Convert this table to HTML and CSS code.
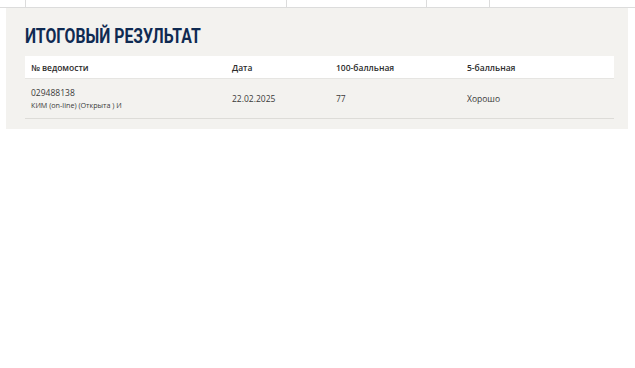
FILE: index.html
```html
<!DOCTYPE html>
<html lang="ru">
<head>
<meta charset="utf-8">
<title>Итоговый результат</title>
<link rel="stylesheet" href="styles.css">
</head>
<body>
  <div class="strip">
    <div class="strip-gap"></div>
    <div class="strip-cell c1"></div>
    <div class="strip-cell c2"></div>
    <div class="strip-cell c3"></div>
  </div>
  <section class="panel">
    <h2 class="panel-title"><span class="title-text">ИТОГОВЫЙ РЕЗУЛЬТАТ</span></h2>
    <table class="results">
      <colgroup>
        <col class="w1"><col class="w2"><col class="w3"><col class="w4">
      </colgroup>
      <thead>
        <tr>
          <th>№ ведомости</th>
          <th>Дата</th>
          <th>100-балльная</th>
          <th>5-балльная</th>
        </tr>
      </thead>
      <tbody>
        <tr>
          <td>
            <div class="sheet-no">029488138</div>
            <div class="sheet-kind">КИМ (on-line) (Открыта ) И</div>
          </td>
          <td>22.02.2025</td>
          <td>77</td>
          <td>Хорошо</td>
        </tr>
      </tbody>
    </table>
  </section>
</body>
</html>
```
FILE: styles.css
```css
html, body {
  margin: 0;
  background: #ffffff;
}

body {
  font-family: "Open Sans", "Noto Sans", sans-serif;
  color: #333333;
}

/* bottom edge of the table above */
.strip {
  display: flex;
  height: 7px;
  border-bottom: 1px solid #dcdcdc;
}

.strip-gap {
  width: 25px;
}

.strip-cell {
  border-left: 1px solid #dcdcdc;
}

.strip-cell.c1 { width: 260px; }
.strip-cell.c2 { width: 139px; }
.strip-cell.c3 { width: 62px; border-right: 1px solid #dcdcdc; }

.panel {
  margin: 0 7px 0 6px;
  background: #f3f2ef;
  padding: 18px 14px 10px 19px;
}

.panel-title {
  margin: 0 0 8px;
  font-family: Roboto, "DejaVu Sans", sans-serif;
  font-weight: bold;
  font-size: 19.5px;
  line-height: 22px;
  color: #0f2a52;
}

/* condensed display face */
.title-text {
  display: inline-block;
  transform: scaleX(0.81);
  transform-origin: left center;
}

.results {
  width: 589px;
  border-collapse: collapse;
  table-layout: fixed;
  font-size: 8.5px;
}

.w1 { width: 201px; }
.w2 { width: 104px; }
.w3 { width: 131px; }
.w4 { width: 153px; }

.results th {
  background: #ffffff;
  height: 22px;
  padding: 0 6px;
  text-align: left;
  font-weight: 600;
  color: #2b2b2b;
  border-bottom: 1px solid #e6e5e2;
}

.results td {
  height: 39px;
  padding: 0 6px;
  vertical-align: middle;
  border-bottom: 1px solid #dddcd8;
  color: #3a3a3a;
}

.sheet-no {
  font-size: 8.5px;
  line-height: 13px;
}

.sheet-kind {
  font-size: 7.2px;
  line-height: 12px;
}
```
